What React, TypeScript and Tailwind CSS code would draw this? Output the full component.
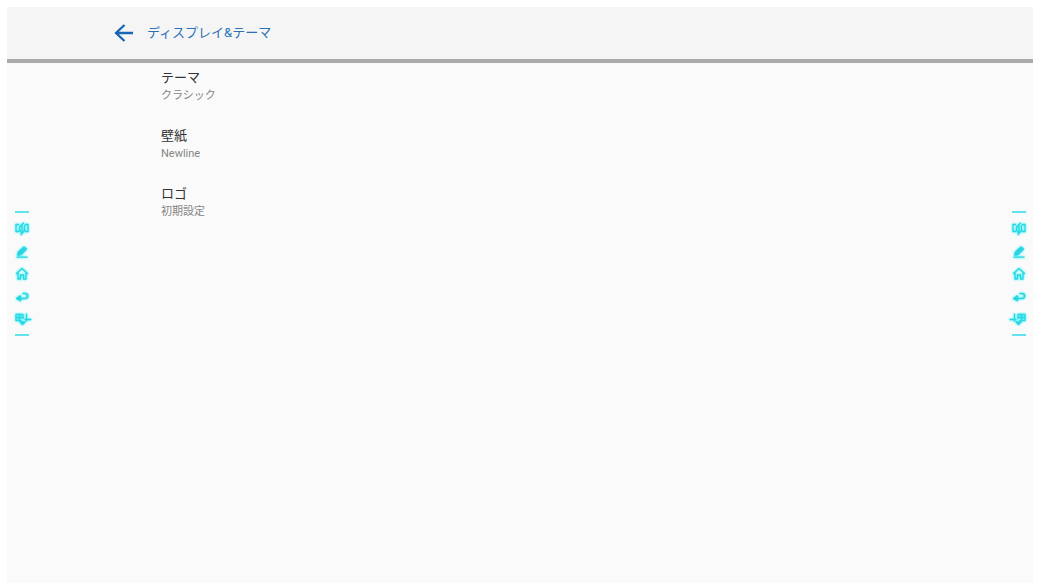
import type { ReactNode } from "react";

const settings = [
  { title: "テーマ", value: "クラシック" },
  { title: "壁紙", value: "Newline" },
  { title: "ロゴ", value: "初期設定" },
];

function ToolIcon({ children }: { children: ReactNode }) {
  return (
    <svg
      viewBox="0 0 20 16"
      className="h-4 w-5 drop-shadow-[0_0_1px_#00f6ff]"
      fill="none"
      stroke="currentColor"
      strokeWidth="1.3"
      strokeLinecap="round"
      strokeLinejoin="round"
    >
      {children}
    </svg>
  );
}

function SideToolbar({ mirrored = false }: { mirrored?: boolean }) {
  return (
    <nav className="flex w-5 flex-col items-center text-[#2fd3e0]">
      <div className="h-0.5 w-3.5 bg-[#62e3eb]" />
      <div className="mt-2 mb-[7px] flex flex-col gap-[6.5px]">
        <ToolIcon>
          <path d="M6.5 3.5H4v7h2.5M13.5 3.5H16v7h-2.5M11.5 2 7.5 6v3.5L10 12M12.5 4.5v5L9 13.5M10 5v5" />
        </ToolIcon>
        <ToolIcon>
          <path d="m5.5 11 1-3L12 3l2.5 2-5.5 5.5z" fill="currentColor" />
          <path d="M5 13.2h10" />
        </ToolIcon>
        <ToolIcon>
          <path d="m4.5 7.5 5.5-5 5.5 5M6 7v6h2.5V9h3v4H14V7" />
        </ToolIcon>
        <ToolIcon>
          <path d="M5 9.5h8c3.5 0 3.5-5 0-5h-2" strokeWidth="1.6" />
          <path d="M8.5 6.8 4.5 9.5l4 2.3z" fill="currentColor" />
        </ToolIcon>
        <ToolIcon>
          <g transform={mirrored ? "translate(20 0) scale(-1 1)" : undefined}>
            <path d="M4 3.5h7M4 6.5h7M4 9.5h5M4 3.5v6M7.5 3.5v6M11 3.5v4M14.5 3v7M13 8.5h6" />
            <path d="m8 11 2.5 2.5L13 11z" fill="currentColor" />
          </g>
        </ToolIcon>
      </div>
      <div className="h-0.5 w-3.5 bg-[#62e3eb]" />
    </nav>
  );
}

function App() {
  return (
    <div className="h-[585px] w-[1040px] overflow-hidden bg-white px-[7px] pt-[7px] pb-0.5 font-['Roboto','Noto_Sans_CJK_JP',sans-serif]">
      <main className="flex h-full flex-col bg-[#fafafa]">
        <header className="flex h-14 shrink-0 items-center border-b-4 border-[#aaaaaa] bg-[#f5f5f5] pl-[107px] text-[#2d70b7]">
          <svg
            viewBox="0 0 20 18"
            className="h-[18px] w-5"
            fill="none"
            stroke="#1765b5"
            strokeWidth="2.3"
          >
            <path d="M19 9H2M10.5 1 2 9l8.5 8" />
          </svg>
          <h1 className="ml-[13px] text-[13px] leading-5 whitespace-nowrap">
            ディスプレイ&テーマ
          </h1>
        </header>

        <div className="flex flex-1 justify-between pr-1">
          <div className="flex">
            <div className="w-[154px] pt-[148px] pl-[5px]">
              <SideToolbar />
            </div>
            <section className="flex flex-col gap-[22px] pt-[5px]">
              {settings.map((item) => (
                <div key={item.title} className="h-9">
                  <h2 className="text-[13px] leading-5 text-[#333333]">
                    {item.title}
                  </h2>
                  <p className="text-[11px] leading-4 text-[#858585]">
                    {item.value}
                  </p>
                </div>
              ))}
            </section>
          </div>
          <div className="pt-[148px]">
            <SideToolbar mirrored />
          </div>
        </div>
      </main>
    </div>
  );
}

export default App;
